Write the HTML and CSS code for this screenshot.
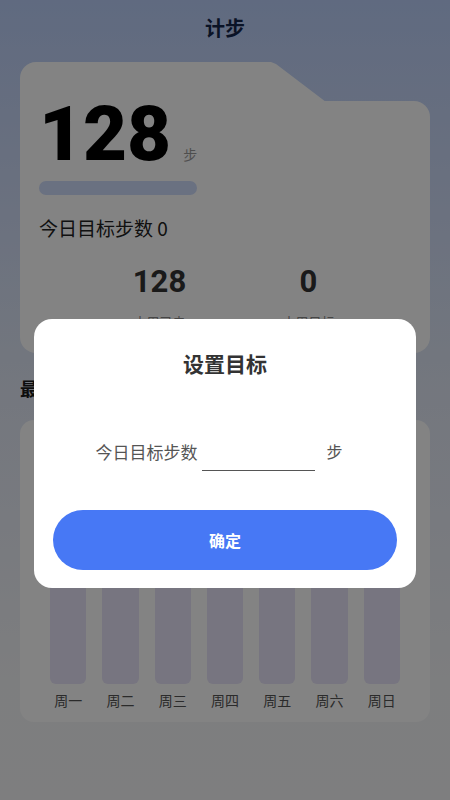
FILE: index.html
```html
<!DOCTYPE html>
<html lang="zh-CN">
<head>
  <meta charset="UTF-8">
  <title>计步</title>
  <link rel="stylesheet" href="styles.css">
</head>
<body>
  <div class="page">
    <!-- Header -->
    <div class="title">计步</div>

    <!-- Today card -->
    <div class="step-card">
      <div class="today">
        <span class="today-num">128</span>
        <span class="today-unit">步</span>
      </div>
      <div class="progress"><div class="progress-fill"></div></div>
      <div class="goal-text">今日目标步数 0</div>
      <div class="stats">
        <div class="stat">
          <div class="stat-num">128</div>
          <div class="stat-label">本周已走</div>
        </div>
        <div class="stat">
          <div class="stat-num">0</div>
          <div class="stat-label">本周目标</div>
        </div>
      </div>
    </div>

    <!-- Weekly chart -->
    <div class="section-title">最近七天</div>
    <div class="chart-card">
      <div class="bars">
        <div class="bar-col"><div class="bar"></div><div class="bar-label">周一</div></div>
        <div class="bar-col"><div class="bar"></div><div class="bar-label">周二</div></div>
        <div class="bar-col"><div class="bar"></div><div class="bar-label">周三</div></div>
        <div class="bar-col"><div class="bar"></div><div class="bar-label">周四</div></div>
        <div class="bar-col"><div class="bar"></div><div class="bar-label">周五</div></div>
        <div class="bar-col"><div class="bar"></div><div class="bar-label">周六</div></div>
        <div class="bar-col"><div class="bar"></div><div class="bar-label">周日</div></div>
      </div>
    </div>
  </div>

  <!-- Goal dialog -->
  <div class="mask">
    <div class="dialog">
      <div class="dialog-title">设置目标</div>
      <div class="dialog-row">
        <span class="row-label">今日目标步数</span>
        <div class="row-input"></div>
        <span class="row-unit">步</span>
      </div>
      <div class="btn">确定</div>
    </div>
  </div>
</body>
</html>
```

FILE: styles.css
```css
body {
  margin: 0;
  height: 800px;
  overflow: hidden;
  font-family: "Noto Sans CJK SC", Roboto, sans-serif;
  background: linear-gradient(180deg, #bbcff9 0%, #dfe6f6 45%, #f4f5f8 85%, #f5f6f8 100%);
  position: relative;
}

.page {
  padding: 0 20px;
}

/* Header */
.title {
  height: 56px;
  line-height: 56px;
  text-align: center;
  font-size: 20px;
  font-weight: bold;
  color: #14264a;
}

/* Today card with folder tab */
.step-card {
  position: relative;
  margin-top: 6px;
  height: 291px;
  padding: 34px 19px 0;
  box-sizing: border-box;
}

.step-card::before {
  content: "";
  position: absolute;
  top: 0;
  left: 0;
  width: 310px;
  height: 42px;
  background: #fff;
  border-top-left-radius: 16px;
  clip-path: polygon(0 0, 251px 0, 256px 2px, 306px 40px, 310px 42px, 0 42px);
}

.step-card::after {
  content: "";
  position: absolute;
  top: 39px;
  left: 0;
  right: 0;
  bottom: 0;
  background: #fff;
  border-radius: 0 16px 16px 16px;
}

.step-card > * {
  position: relative;
  z-index: 1;
}

.today {
  display: flex;
  align-items: baseline;
  height: 76px;
}

.today-num {
  font-family: Roboto, sans-serif;
  font-size: 76px;
  line-height: 76px;
  font-weight: 900;
  color: #000;
}

.today-unit {
  margin-left: 12px;
  font-size: 14px;
  color: #999;
}

.progress {
  margin-top: 9px;
  width: 158px;
  height: 14px;
  border-radius: 7px;
  background: #cfdcfc;
}

.progress-fill {
  width: 0;
  height: 100%;
}

.goal-text {
  margin-top: 20px;
  font-size: 19px;
  line-height: 26px;
  color: #222;
}

.stats {
  display: flex;
  margin-top: 24px;
  margin-left: 46px;
}

.stat {
  width: 149px;
  text-align: center;
}

.stat-num {
  font-family: Roboto, sans-serif;
  font-size: 31px;
  line-height: 34px;
  font-weight: bold;
  color: #333;
}

.stat-label {
  margin-top: 13px;
  font-size: 13px;
  line-height: 20px;
  color: #888;
}

/* Weekly chart */
.section-title {
  margin-top: 22px;
  font-size: 18px;
  line-height: 26px;
  font-weight: bold;
  color: #1a1a1a;
}

.chart-card {
  margin-top: 19px;
  background: #fff;
  border-radius: 14px;
  padding: 20px 30px 12px;
}

.bars {
  display: grid;
  grid-template-columns: repeat(7, 1fr);
  column-gap: 16px;
}

.bar-col {
  display: flex;
  flex-direction: column;
  align-items: stretch;
}

.bar {
  height: 244px;
  border-radius: 6px;
  background: #e7e3f9;
}

.bar-label {
  margin-top: 6px;
  font-size: 14px;
  line-height: 20px;
  text-align: center;
  white-space: nowrap;
  color: #555;
}

/* Dialog */
.mask {
  position: absolute;
  inset: 0;
  z-index: 10;
  background: rgba(0, 0, 0, 0.487);
  display: flex;
  flex-direction: column;
  align-items: center;
  padding-top: 319px;
  box-sizing: border-box;
}

.dialog {
  width: 382px;
  box-sizing: border-box;
  background: #fff;
  border-radius: 18px;
  padding: 30px 19px 18px;
}

.dialog-title {
  text-align: center;
  font-size: 21px;
  line-height: 28px;
  font-weight: bold;
  color: #333;
}

.dialog-row {
  display: flex;
  align-items: center;
  justify-content: center;
  margin-top: 54px;
  margin-left: -12px;
  height: 40px;
}

.row-label {
  font-size: 17px;
  color: #555;
}

.row-input {
  width: 113px;
  height: 40px;
  margin-left: 5px;
  box-sizing: border-box;
  border-bottom: 1px solid #555;
}

.row-unit {
  margin-left: 11px;
  font-size: 16px;
  color: #555;
}

.btn {
  margin-top: 39px;
  height: 60px;
  line-height: 60px;
  border-radius: 30px;
  background: #4778f5;
  text-align: center;
  font-size: 16px;
  font-weight: bold;
  color: #fff;
}
```
